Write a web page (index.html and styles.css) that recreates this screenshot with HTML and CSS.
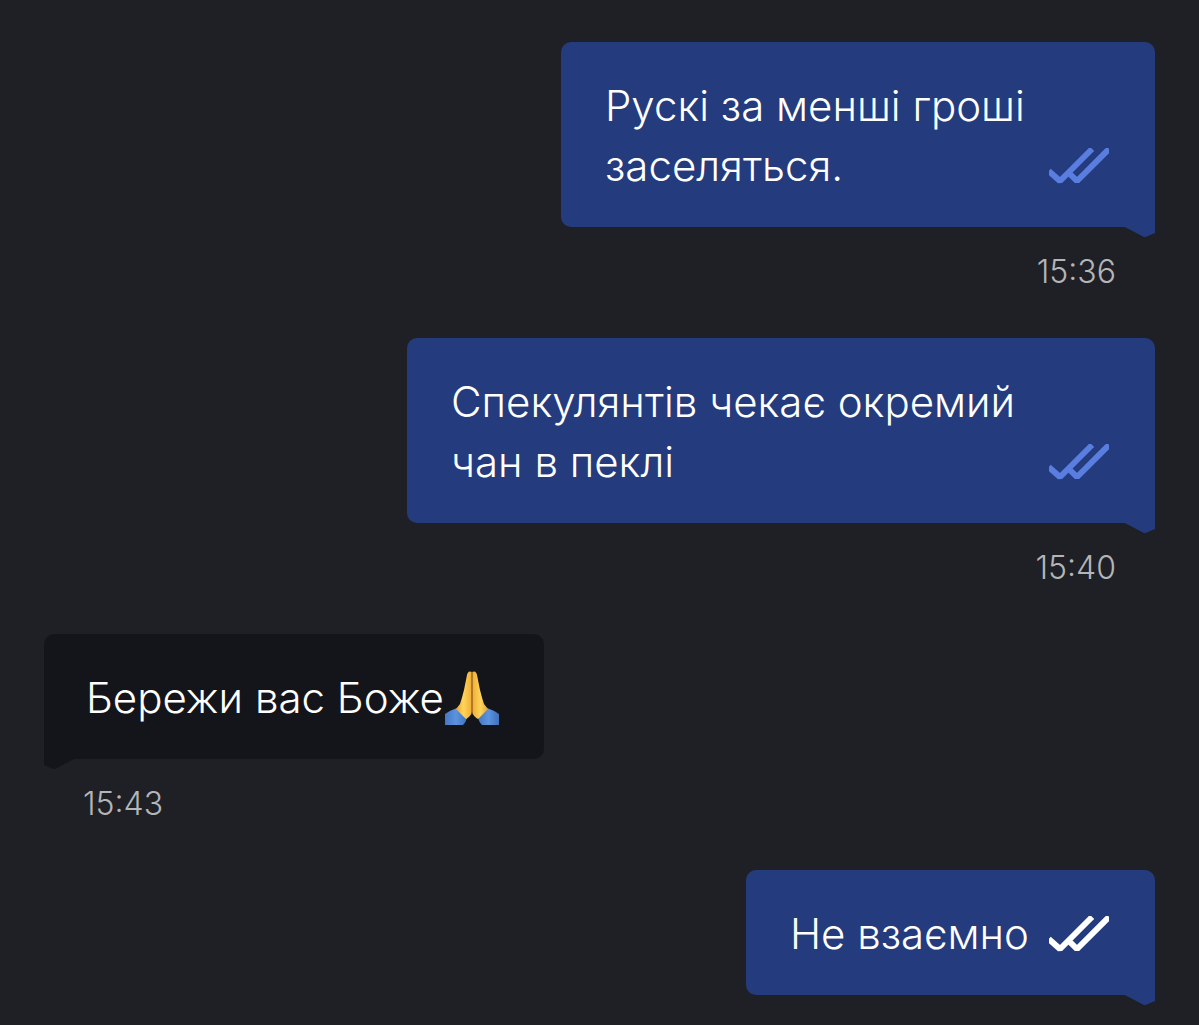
FILE: index.html
```html
<!DOCTYPE html>
<html lang="uk">
<head>
<meta charset="utf-8">
<meta name="viewport" content="width=device-width, initial-scale=1">
<title>Чат</title>
<link rel="stylesheet" href="styles.css">
</head>
<body>
<svg class="defs" aria-hidden="true">
  <symbol id="checks" viewBox="0 0 60 36">
    <path d="M2 25 11 33 41 3M20 25 28 33 58 3" fill="none" stroke="currentColor" stroke-width="6" stroke-linecap="square" stroke-linejoin="bevel"/>
  </symbol>
  <symbol id="tail" viewBox="0 0 32 12">
    <path d="M0 0 19 10Q22 12 25 10L32 7V0Z" fill="currentColor"/>
  </symbol>
</svg>
<main class="chat">
  <article class="message sent">
    <div class="bubble medium">
      <p class="text">Рускі за менші гроші<br>заселяться.</p>
      <svg class="status read" role="img" aria-label="Прочитано"><use href="#checks"/></svg>
      <svg class="tail" aria-hidden="true"><use href="#tail"/></svg>
    </div>
    <time class="time" datetime="15:36">15:36</time>
  </article>
  <article class="message sent">
    <div class="bubble wide">
      <p class="text">Спекулянтів чекає окремий<br>чан в пеклі</p>
      <svg class="status read" role="img" aria-label="Прочитано"><use href="#checks"/></svg>
      <svg class="tail" aria-hidden="true"><use href="#tail"/></svg>
    </div>
    <time class="time" datetime="15:40">15:40</time>
  </article>
  <article class="message received">
    <div class="bubble">
      <p class="text">Бережи вас Боже</p>
      <svg class="emoji" viewBox="0 0 56 56" role="img" aria-label="Складені долоні">
        <defs>
          <linearGradient id="skin-left" x1="0" x2="1"><stop offset="0" stop-color="#e5a02d"/><stop offset=".45" stop-color="#ffd559"/><stop offset="1" stop-color="#f0ac38"/></linearGradient>
          <linearGradient id="skin-right" x1="0" x2="1"><stop offset="0" stop-color="#f0ac38"/><stop offset=".55" stop-color="#ffd559"/><stop offset="1" stop-color="#e5a02d"/></linearGradient>
          <linearGradient id="sleeve" x1="0" x2="1"><stop offset="0" stop-color="#4577c4"/><stop offset=".5" stop-color="#5c93df"/><stop offset="1" stop-color="#3f70ba"/></linearGradient>
        </defs>
        <path d="M1 44Q7 40 13 38L23 48Q22 52 19 55H1Z" fill="url(#sleeve)"/>
        <path d="M55 44Q49 40 43 38L34 48Q35 52 38 55H55Z" fill="url(#sleeve)"/>
        <path d="M28 2Q24 0 23 5L20 20Q18 28 16 34L12 39 22 49Q27 46 28 42Z" fill="url(#skin-left)"/>
        <path d="M28 2Q32 0 33 5L36 20Q38 28 40 34L44 39 34 49Q29 46 28 42Z" fill="url(#skin-right)"/>
        <path d="M28 2V44" stroke="#70450f" stroke-width="1"/>
      </svg>
      <svg class="tail" aria-hidden="true"><use href="#tail"/></svg>
    </div>
    <time class="time" datetime="15:43">15:43</time>
  </article>
  <article class="message sent">
    <div class="bubble">
      <p class="text">Не взаємно</p>
      <svg class="status" role="img" aria-label="Доставлено"><use href="#checks"/></svg>
      <svg class="tail" aria-hidden="true"><use href="#tail"/></svg>
    </div>
  </article>
</main>
</body>
</html>
```
FILE: styles.css
```css
* {
  box-sizing: border-box;
}

body {
  margin: 0;
  background: #1f2025;
  color: #fff;
  font-family: Inter, "Noto Sans", sans-serif;
  font-weight: 300;
}

.defs {
  display: none;
}

.chat {
  display: flex;
  flex-direction: column;
  gap: 46px;
  padding: 42px 44px 29px;
}

.message {
  display: flex;
  flex-direction: column;
  align-items: flex-start;
  gap: 25px;
}

.sent {
  align-items: flex-end;
}

.bubble {
  position: relative;
  display: flex;
  align-items: flex-end;
  justify-content: space-between;
  gap: 20px;
  padding: 34px 46px 31px 44px;
  border-radius: 10px;
  background: #14151a;
}

.medium {
  min-width: 594px;
}

.wide {
  min-width: 748px;
}

.sent .bubble {
  border-bottom-right-radius: 0;
  background: #243b7e;
}

.received .bubble {
  gap: 0;
  padding-right: 44px;
  padding-left: 42px;
  border-bottom-left-radius: 0;
}

.text {
  margin: 0;
  font-size: 42px;
  line-height: 60px;
}

.status {
  flex: none;
  width: 60px;
  height: 36px;
  margin-bottom: 12px;
}

.read {
  color: #5a7de0;
}

.emoji {
  flex: none;
  width: 56px;
  height: 56px;
  margin-bottom: 2px;
}

.tail {
  position: absolute;
  top: 100%;
  right: 0;
  width: 32px;
  height: 12px;
  margin-top: -1px;
  color: #243b7e;
}

.received .tail {
  right: auto;
  left: 0;
  color: #14151a;
  transform: scaleX(-1);
}

.time {
  padding: 0 39px;
  color: #b4b5b9;
  font-size: 32px;
  line-height: 40px;
}
```
